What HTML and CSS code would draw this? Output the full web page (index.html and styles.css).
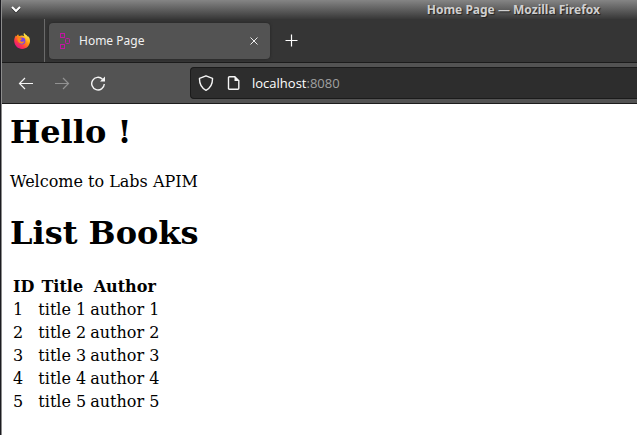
FILE: index.html
```html
<!DOCTYPE html>
<html lang="en">
<head>
<meta charset="utf-8">
<title>Home Page</title>
<link rel="stylesheet" href="styles.css">
</head>
<body>
<div class="window">
  <header class="titlebar">
    <button class="window-menu" aria-label="Window menu">
      <svg width="10" height="7" viewBox="0 0 10 7"><path d="M1 1l4 4 4-4" fill="none" stroke="#222" stroke-width="2" transform="translate(0 1)"/><path d="M1 1l4 4 4-4" fill="none" stroke="#fff" stroke-width="2"/></svg>
    </button>
    <span class="window-title">Home Page — Mozilla Firefox</span>
  </header>
  <div class="tabstrip">
    <button class="firefox" aria-label="Firefox View">
      <svg width="16" height="16" viewBox="0 0 16 16">
        <defs>
          <linearGradient id="flame" x1="0.85" y1="0.1" x2="0.2" y2="0.9"><stop offset="0" stop-color="#fff44f"/><stop offset="0.4" stop-color="#ff980e"/><stop offset="0.75" stop-color="#ff3647"/><stop offset="1" stop-color="#e31587"/></linearGradient>
          <linearGradient id="tail" x1="0" y1="0" x2="0" y2="1"><stop offset="0" stop-color="#fff44f"/><stop offset="1" stop-color="#ffa436" stop-opacity="0"/></linearGradient>
        </defs>
        <path d="M10 0c-.6 1.200-.2 2.300.7 3.200C9 2.500 7 2.300 5.300 3.100 4.500 2.800 4.200 2 4.300 1.300 3.400 1.700 2.900 2.500 2.600 3.200L1.900 2.400C.7 4 0 6.200.2 8.300.5 12.600 3.900 16 8.100 16c4.400 0 7.900-3.600 7.900-8 0-2.100-.8-3.900-1.900-5l.2 1.500C13.100 2 11 2.100 10 0z" fill="url(#flame)"/>
        <circle cx="8" cy="8" r="3.400" fill="#7542e5"/>
        <path d="M3.500 5.300c1.700-.7 3 .1 4.700.5-.3 1-1.900 1-2 2 .8 1.400 3 1.200 4.300.3-.4 2-2.200 3.100-4 2.500C4.300 9.900 3.300 7.500 3.500 5.300z" fill="#ff8a16"/>
        <path d="M10 0c-.8 2 .9 3.300 2 5 1 1.600.9 3.800.2 5.200C14 9 15 6.500 14.300 4.500 13.100 2 11 2.100 10 0z" fill="url(#tail)"/>
      </svg>
    </button>
    <div class="tab">
      <svg class="favicon" width="12" height="18" viewBox="0 0 12 18" fill="none" stroke="#c414a4"><rect x="1.500" y="1.500" width="4" height="4"/><rect x="6.500" y="6.500" width="4" height="5" rx="1"/><rect x="1.500" y="12.500" width="4" height="4"/></svg>
      <span class="tab-label">Home Page</span>
      <button class="close" aria-label="Close tab"><svg width="8" height="8" viewBox="0 0 8 8"><path d="M.5.5l7 7M7.500.5l-7 7" stroke="#ededed"/></svg></button>
    </div>
    <button class="new-tab" aria-label="New tab"><svg width="13" height="13" viewBox="0 0 13 13"><path d="M6.500 .5v12M.5 6.500h12" stroke="#fff" stroke-width="1.200"/></svg></button>
  </div>
  <nav class="toolbar">
    <button class="nav" aria-label="Back"><svg width="16" height="16" viewBox="0 0 16 16" fill="none" stroke="#f5f5f5" stroke-width="1.200"><path d="M7 3L1.500 8.500 7 14M1.500 8.500H15"/></svg></button>
    <button class="nav" aria-label="Forward" disabled><svg width="16" height="16" viewBox="0 0 16 16" fill="none" stroke="#929292" stroke-width="1.200"><path d="M9 3L14.500 8.500 9 14M14.500 8.500H1"/></svg></button>
    <button class="nav" aria-label="Reload"><svg width="16" height="16" viewBox="0 0 16 16"><path d="M12.500 4.200A6.300 6.300 0 1 0 14.300 9" fill="none" stroke="#f5f5f5" stroke-width="1.400"/><path d="M15 1.500V6.500H10z" fill="#f5f5f5"/></svg></button>
    <div class="urlbar">
      <svg width="16" height="16" viewBox="0 0 16 16"><path d="M8 .8l6.500 2.500C14.700 9 12.500 13 8 15.300 3.500 13 1.300 9 1.500 3.300z" fill="none" stroke="#f5f5f5" stroke-width="1.400" stroke-linejoin="round"/></svg>
      <svg width="16" height="16" viewBox="0 0 16 16"><path d="M4.500 1.700h5.300l4 4v7.600q0 1-1 1H4.500q-1 0-1-1V2.700q0-1 1-1z" fill="none" stroke="#f5f5f5" stroke-width="1.400"/><path d="M9.500 1.200V6h5z" fill="#f5f5f5"/></svg>
      <a class="address" href="#page">localhost<span class="port">:8080</span></a>
    </div>
  </nav>
  <main class="page" id="page">
    <h1>Hello !</h1>
    <p>Welcome to Labs APIM</p>
    <h1>List Books</h1>
    <table>
      <thead><tr><th>ID</th><th>Title</th><th>Author</th></tr></thead>
      <tbody>
        <tr><td>1</td><td>title 1</td><td>author 1</td></tr>
        <tr><td>2</td><td>title 2</td><td>author 2</td></tr>
        <tr><td>3</td><td>title 3</td><td>author 3</td></tr>
        <tr><td>4</td><td>title 4</td><td>author 4</td></tr>
        <tr><td>5</td><td>title 5</td><td>author 5</td></tr>
      </tbody>
    </table>
  </main>
</div>
</body>
</html>
```
FILE: styles.css
```css
* { box-sizing: border-box; }
body {
  margin: 0;
  background: #1b1b20;
  font-family: "Noto Sans", sans-serif;
  font-size: 12px;
  color: #fff;
}
button {
  display: flex;
  align-items: center;
  justify-content: center;
  padding: 0;
  border: 0;
  background: none;
  color: inherit;
}
.window {
  display: flex;
  flex-direction: column;
  min-height: 100vh;
  margin-left: 1px;
  border-left: 1px solid #8c8c8c;
}
.titlebar {
  display: flex;
  align-items: center;
  justify-content: space-between;
  height: 19px;
  padding: 0 37px 0 9px;
  background: linear-gradient(#858585, #383838);
}
.window-title {
  line-height: 18px;
  font-weight: 700;
  color: #d0d0d0;
  text-shadow: 1px 1px 1px #222;
}
.tabstrip {
  display: flex;
  align-items: center;
  height: 44px;
  background: #353535;
  border-bottom: 1px solid #1c1c1c;
}
.firefox {
  width: 43px;
  height: 100%;
  padding-right: 3px;
  border-right: 1px solid #6a6a6a;
}
.tab {
  display: flex;
  align-items: center;
  width: 221px;
  height: 36px;
  margin-left: 4px;
  padding: 0 12px 0 10px;
  border-radius: 4px;
  background: #535353;
  box-shadow: 0 0 3px #222;
}
.tab-label { flex: 1; margin-left: 8px; line-height: 18px; color: #f0f0f0; }
.new-tab { width: 43px; height: 36px; }
.toolbar {
  display: flex;
  align-items: center;
  height: 41px;
  padding-left: 6px;
  background: #535353;
  border-bottom: 1px solid #1c1c1c;
}
.nav { width: 36px; height: 32px; }
.urlbar {
  display: flex;
  flex: 1;
  align-items: center;
  gap: 11px;
  height: 32px;
  margin-left: 74px;
  padding-left: 7px;
  border: 1px solid #1b1b1b;
  border-right: 0;
  border-radius: 4px 0 0 4px;
  background: #2d2d2d;
}
.address {
  color: #fff;
  font-family: "Open Sans", "Noto Sans", sans-serif;
  font-size: 13px;
  text-decoration: none;
}
.port { color: #a0a0a0; }
.page {
  flex: 1;
  padding: 9px 8px 8px;
  background: #fff;
  color: #000;
  font-family: "DejaVu Serif", serif;
  font-size: 16px;
  line-height: 19px;
}
h1 { margin: 0; font-size: 32px; line-height: 38px; }
p { margin: 21px 0 23px; }
table { margin-top: 22px; border-spacing: 2px; }
th, td { padding: 1px; }
```
